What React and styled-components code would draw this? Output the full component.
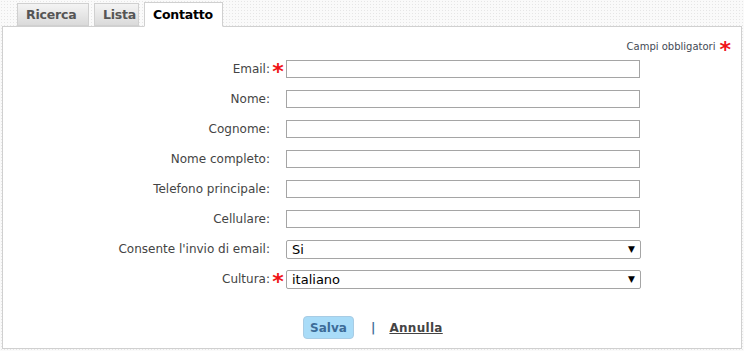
import React from 'react';
import styled, { createGlobalStyle } from 'styled-components';

const Global = createGlobalStyle`
  html, body { margin: 0; padding: 0; background: #fff; }
  body { font-family: "DejaVu Sans", Verdana, sans-serif; }
`;

const Page = styled.div`
  width: 744px;
  height: 351px;
  box-sizing: border-box;
  padding: 0 2px;
  background-color: #fafafa;
  background-image: radial-gradient(#e6e6e6 0.6px, transparent 0.7px);
  background-size: 3px 3px;
`;

const Tabs = styled.div`
  display: flex;
  align-items: flex-end;
  gap: 5px;
  height: 26px;
  padding-left: 15px;
  position: relative;
  z-index: 1;
`;

const Tab = styled.div`
  width: ${p => p.w}px;
  height: ${p => (p.active ? '25px' : '23px')};
  box-sizing: border-box;
  padding-left: 8px;
  border: 1px solid #d0d0d0;
  border-bottom: ${p => (p.active ? '1px solid #fff' : '1px solid #d0d0d0')};
  margin-bottom: ${p => (p.active ? '-1px' : '0')};
  background: ${p => (p.active ? '#fff' : 'linear-gradient(#f4f4f4, #dadada)')};
  color: ${p => (p.active ? '#000' : '#555')};
  font-weight: bold;
  font-size: 12.5px;
  letter-spacing: -0.2px;
  line-height: ${p => (p.active ? '24px' : '22px')};
`;

const Panel = styled.div`
  height: 323px;
  box-sizing: border-box;
  border: 1px solid #d0d0d0;
  background: #fff;
  padding-top: 12px;
`;

const Required = styled.div`
  display: flex;
  justify-content: flex-end;
  align-items: center;
  gap: 4px;
  padding-right: 10px;
  font-size: 10px;
  color: #444a55;
  height: 14px;
`;

const Star = styled.span`
  color: #f01418;
  font-size: 22px;
  font-weight: bold;
  line-height: 10px;
  position: relative;
  top: 4px;
`;

const Form = styled.div`
  display: grid;
  grid-template-columns: 267px 16px 354px;
  grid-auto-rows: 30px;
  align-items: center;
  margin-top: 1px;
`;

const Label = styled.label`
  text-align: right;
  font-size: 12px;
  color: #444;
`;

const StarCell = styled.div`
  text-align: center;
`;

const Input = styled.input`
  box-sizing: border-box;
  width: 354px;
  height: 18px;
  border: 1px solid #a5a5a5;
  margin: 0;
  padding: 0 3px;
`;

const Select = styled.div`
  box-sizing: border-box;
  width: 355px;
  height: 19px;
  border: 1px solid #a5a5a5;
  border-radius: 2px;
  display: flex;
  align-items: center;
  justify-content: space-between;
  padding: 0 5px 0 5px;
  font-size: 13px;
  color: #000;
  span:last-child { font-size: 9px; }
`;

const Actions = styled.div`
  display: flex;
  align-items: center;
  padding-left: 300px;
  margin-top: 22px;
  font-size: 12px;
  font-weight: bold;
`;

const SaveButton = styled.button`
  width: 51px;
  height: 23px;
  border: 1px solid #a8cce4;
  border-radius: 4px;
  background: #a9dcf8;
  color: #3c6c98;
  font-family: inherit;
  font-size: 12px;
  font-weight: bold;
  padding: 0;
`;

const Sep = styled.span`
  color: #3c6c98;
  margin: 0 14px 0 17px;
`;

const Link = styled.a`
  color: #444;
  text-decoration: underline;
  letter-spacing: 0.3px;
`;

const fields = [
  { label: 'Email:', req: true },
  { label: 'Nome:' },
  { label: 'Cognome:' },
  { label: 'Nome completo:' },
  { label: 'Telefono principale:' },
  { label: 'Cellulare:' },
  { label: "Consente l'invio di email:", select: 'Si' },
  { label: 'Cultura:', req: true, select: 'italiano' },
];

export default function App() {
  return (
    <Page>
      <Global />
      <Tabs>
        <Tab w={72}>Ricerca</Tab>
        <Tab w={45}>Lista</Tab>
        <Tab w={79} active>Contatto</Tab>
      </Tabs>
      <Panel>
        <Required>
          Campi obbligatori <Star>*</Star>
        </Required>
        <Form>
          {fields.map(f => (
            <React.Fragment key={f.label}>
              <Label>{f.label}</Label>
              <StarCell>{f.req && <Star>*</Star>}</StarCell>
              {f.select ? (
                <Select>
                  <span>{f.select}</span>
                  <span>▼</span>
                </Select>
              ) : (
                <Input type="text" />
              )}
            </React.Fragment>
          ))}
        </Form>
        <Actions>
          <SaveButton>Salva</SaveButton>
          <Sep>|</Sep>
          <Link href="#">Annulla</Link>
        </Actions>
      </Panel>
    </Page>
  );
}
